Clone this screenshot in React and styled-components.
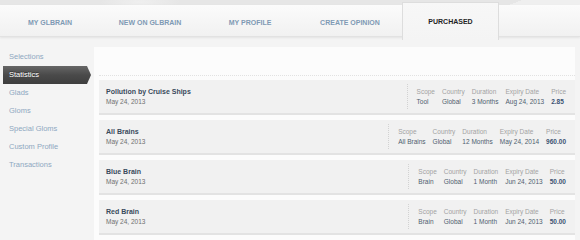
import React from 'react';
import styled, { createGlobalStyle } from 'styled-components';

const tabs = ['MY GLBRAIN', 'NEW ON GLBRAIN', 'MY PROFILE', 'CREATE OPINION', 'PURCHASED'];
const menu = ['Selections', 'Statistics', 'Glads', 'Gloms', 'Special Gloms', 'Custom Profile', 'Transactions'];

const purchases = [
  { title: 'Pollution by Cruise Ships', date: 'May 24, 2013', scope: 'Tool', country: 'Global', duration: '3 Months', expiry: 'Aug 24, 2013', price: '2.85' },
  { title: 'All Brains', date: 'May 24, 2013', scope: 'All Brains', country: 'Global', duration: '12 Months', expiry: 'May 24, 2014', price: '960.00' },
  { title: 'Blue Brain', date: 'May 24, 2013', scope: 'Brain', country: 'Global', duration: '1 Month', expiry: 'Jun 24, 2013', price: '50.00' },
  { title: 'Red Brain', date: 'May 24, 2013', scope: 'Brain', country: 'Global', duration: '1 Month', expiry: 'Jun 24, 2013', price: '50.00' },
];

const columns = [
  ['Scope', 'scope'],
  ['Country', 'country'],
  ['Duration', 'duration'],
  ['Expiry Date', 'expiry'],
  ['Price', 'price'],
];

const App = () => {
  return (
    <Page>
      <GlobalStyle />
      <TopStrip />
      <TabBar>
        {tabs.map((t, i) => (
          <Tab key={t} $active={i === tabs.length - 1}>{t}</Tab>
        ))}
      </TabBar>
      <Main>
        <Sidebar>
          {menu.map((m) => (
            <MenuItem key={m} $active={m === 'Statistics'}>{m}</MenuItem>
          ))}
        </Sidebar>
        <Panel>
          <PanelHead />
          {purchases.map((p) => (
            <Row key={p.title}>
              <Info>
                <Title>{p.title}</Title>
                <Date>{p.date}</Date>
              </Info>
              <Details>
                {columns.map(([label, key]) => (
                  <Col key={key}>
                    <Label>{label}</Label>
                    <Value $price={key === 'price'}>{p[key]}</Value>
                  </Col>
                ))}
              </Details>
            </Row>
          ))}
        </Panel>
      </Main>
    </Page>
  );
};

export default App;

const GlobalStyle = createGlobalStyle`
  html, body {
    margin: 0;
    padding: 0;
    background: #f4f4f4;
  }
  body {
    font-family: "Liberation Sans", Arial, sans-serif;
  }
`;

const Page = styled.div`
  width: 580px;
  height: 240px;
  overflow: hidden;
  background: #f4f4f4;
`;

const TopStrip = styled.div`
  height: 5px;
  background:
    radial-gradient(ellipse 40px 8px at 140px 2px, #efefef, transparent),
    linear-gradient(160deg, transparent 88%, #efefef 88%),
    #e6e6e6;
`;

const TabBar = styled.nav`
  display: flex;
  height: 31px;
  background: linear-gradient(#fbfbfb, #f1f1f1);
  border-bottom: 1px solid #e2e2e2;
  box-shadow: 0 1px 2px rgba(0, 0, 0, 0.07);
  position: relative;
  z-index: 1;
`;

const Tab = styled.div`
  width: ${(p) => (p.$active ? '97px' : '100px')};
  display: flex;
  align-items: center;
  justify-content: center;
  padding-top: 3px;
  box-sizing: border-box;
  font-size: 7px;
  font-weight: bold;
  color: ${(p) => (p.$active ? '#1f1f1f' : '#7f9ab4')};
  ${(p) =>
    p.$active &&
    `
    margin-left: 2px;
    margin-top: -3px;
    margin-bottom: -4px;
    padding-top: 0;
    background: linear-gradient(#f7f7f7, #f4f4f4);
    border: 1px solid #dddddd;
    border-bottom: none;
  `}
`;

const Main = styled.div`
  display: flex;
  align-items: flex-start;
`;

const Sidebar = styled.ul`
  list-style: none;
  margin: 0;
  padding: 11px 0 0;
  width: 94px;
  flex-shrink: 0;
`;

const MenuItem = styled.li`
  height: 18px;
  line-height: 18px;
  font-size: 7.5px;
  color: ${(p) => (p.$active ? '#ffffff' : '#8ea8c1')};
  padding-left: ${(p) => (p.$active ? '6px' : '9px')};
  ${(p) =>
    p.$active &&
    `
    margin-left: 3px;
    width: 82px;
    background: linear-gradient(#666666, #4a4a4a 50%, #3e3e3e);
    clip-path: polygon(0 0, calc(100% - 4px) 0, 100% 50%, calc(100% - 4px) 100%, 0 100%);
    text-shadow: 0 -1px 0 rgba(0,0,0,.4);
  `}
`;

const Panel = styled.section`
  margin-top: 10px;
  width: 476px;
  padding-left: 5px;
  padding-bottom: 10px;
  background: #fcfcfc;
`;

const PanelHead = styled.div`
  height: 28px;
  border-bottom: 1px dotted #e2e2e2;
  margin-bottom: 4px;
`;

const Row = styled.div`
  height: 33px;
  display: flex;
  align-items: center;
  justify-content: space-between;
  background: #f1f1f1;
  border-bottom: 2px solid #e3e3e3;
  margin-bottom: 5px;
`;

const Info = styled.div`
  padding-left: 7px;
  display: flex;
  flex-direction: column;
  gap: 3px;
`;

const Title = styled.div`
  font-size: 7px;
  font-weight: bold;
  color: #394a5c;
`;

const Date = styled.div`
  font-size: 6.5px;
  color: #6f6f6f;
`;

const Details = styled.div`
  display: flex;
  gap: 7px;
  margin-right: 9px;
  padding: 4px 0 4px 9px;
  border-left: 1px dotted #d2d2d2;
`;

const Col = styled.div`
  display: flex;
  flex-direction: column;
  gap: 3px;
`;

const Label = styled.span`
  font-size: 6.5px;
  color: #a3a3a3;
  white-space: nowrap;
`;

const Value = styled.span`
  font-size: 6.5px;
  white-space: nowrap;
  color: ${(p) => (p.$price ? '#3b5272' : '#4f5e6f')};
  font-weight: ${(p) => (p.$price ? 'bold' : 'normal')};
`;
